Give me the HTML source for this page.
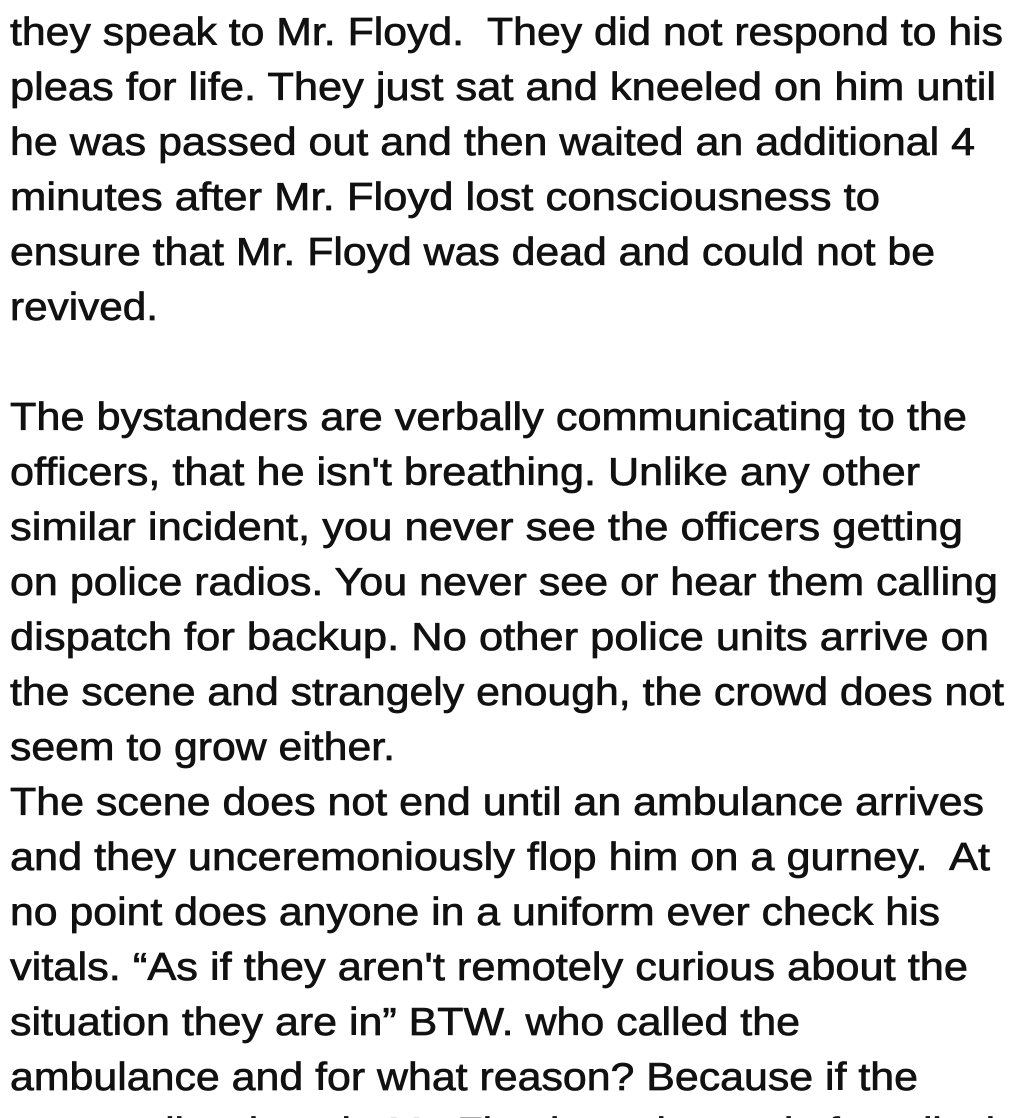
<!DOCTYPE html>
<html><head><meta charset="utf-8"><style>
html,body{margin:0;padding:0;background:#fff;width:1015px;height:1118px;overflow:hidden}
svg text{font-family:"Liberation Sans",Arial,sans-serif;font-size:39px;fill:#111;stroke:#111;stroke-width:0.7px;white-space:pre}
</style></head><body>
<svg width="1015" height="1118" xmlns="http://www.w3.org/2000/svg" xml:space="preserve">
<text x="10" y="-10" textLength="980" lengthAdjust="spacingAndGlyphs">and they spoke in calm voices while they kneeled on him every</text>
<text x="10" y="45" textLength="993" lengthAdjust="spacingAndGlyphs">they speak to Mr. Floyd.  They did not respond to his</text>
<text x="10" y="100" textLength="986" lengthAdjust="spacingAndGlyphs">pleas for life. They just sat and kneeled on him until</text>
<text x="10" y="155" textLength="965" lengthAdjust="spacingAndGlyphs">he was passed out and then waited an additional 4</text>
<text x="10" y="210" textLength="870" lengthAdjust="spacingAndGlyphs">minutes after Mr. Floyd lost consciousness to</text>
<text x="10" y="265" textLength="925" lengthAdjust="spacingAndGlyphs">ensure that Mr. Floyd was dead and could not be</text>
<text x="10" y="320" textLength="148" lengthAdjust="spacingAndGlyphs">revived.</text>
<text x="10" y="430" textLength="957" lengthAdjust="spacingAndGlyphs">The bystanders are verbally communicating to the</text>
<text x="10" y="485" textLength="910" lengthAdjust="spacingAndGlyphs">officers, that he isn't breathing. Unlike any other</text>
<text x="10" y="540" textLength="953" lengthAdjust="spacingAndGlyphs">similar incident, you never see the officers getting</text>
<text x="10" y="595" textLength="988" lengthAdjust="spacingAndGlyphs">on police radios. You never see or hear them calling</text>
<text x="10" y="650" textLength="979" lengthAdjust="spacingAndGlyphs">dispatch for backup. No other police units arrive on</text>
<text x="10" y="705" textLength="994" lengthAdjust="spacingAndGlyphs">the scene and strangely enough, the crowd does not</text>
<text x="10" y="760" textLength="385" lengthAdjust="spacingAndGlyphs">seem to grow either.</text>
<text x="10" y="815" textLength="974" lengthAdjust="spacingAndGlyphs">The scene does not end until an ambulance arrives</text>
<text x="10" y="870" textLength="980" lengthAdjust="spacingAndGlyphs">and they unceremoniously flop him on a gurney.  At</text>
<text x="10" y="925" textLength="930" lengthAdjust="spacingAndGlyphs">no point does anyone in a uniform ever check his</text>
<text x="10" y="980" textLength="958" lengthAdjust="spacingAndGlyphs">vitals. “As if they aren't remotely curious about the</text>
<text x="10" y="1035" textLength="790" lengthAdjust="spacingAndGlyphs">situation they are in” BTW. who called the</text>
<text x="10" y="1090" textLength="908" lengthAdjust="spacingAndGlyphs">ambulance and for what reason? Because if the</text>
<text x="10" y="1145" textLength="985" lengthAdjust="spacingAndGlyphs">paramedics thought Mr. Floyd was in need of medical</text>
</svg>
</body></html>
